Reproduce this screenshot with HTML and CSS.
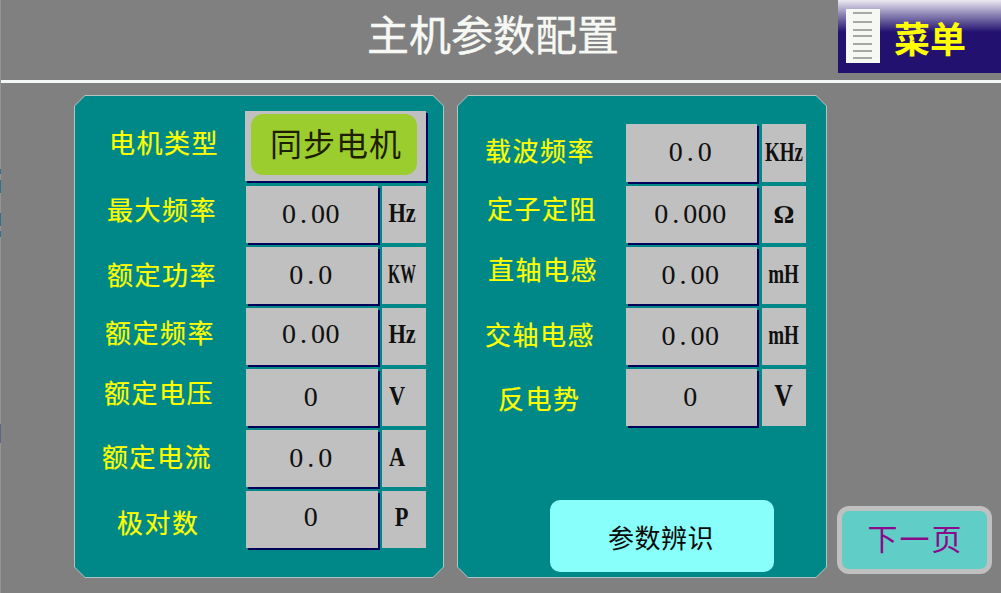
FILE: index.html
```html
<!DOCTYPE html>
<html lang="zh-CN">
<head>
    <meta charset="UTF-8">
    <title>主机参数配置</title>
    <link rel="stylesheet" href="styles.css">
</head>
<body>

<div class="edge"></div>

<header class="header">
    <h1 class="title">主机参数配置</h1>
    <div class="menu">
        <svg class="menu-icon" width="34" height="54" viewBox="0 0 34 54">
            <rect width="34" height="54" fill="#f6f8f4"/>
            <g stroke="#8c8c8c" stroke-width="1.5">
                <line x1="7" y1="4" x2="26" y2="4"/>
                <line x1="7" y1="13" x2="26" y2="13"/>
                <line x1="7" y1="21" x2="26" y2="21"/>
                <line x1="7" y1="27" x2="26" y2="27"/>
                <line x1="7" y1="35" x2="26" y2="35"/>
                <line x1="7" y1="42" x2="26" y2="42"/>
                <line x1="7" y1="49" x2="26" y2="49"/>
            </g>
        </svg>
        <span class="menu-text">菜单</span>
    </div>
</header>
<div class="rule"></div>

<main class="main">
    <section class="panel">
        <div class="panel-body grid-left">
            <div class="label l-1">电机类型</div>
            <div class="select"><span class="select-inner">同步电机</span></div>

            <div class="label l-2">最大频率</div>
            <div class="value">0<span class="dot">.</span>00</div>
            <div class="unit off"><span>Hz</span></div>

            <div class="label l-3">额定功率</div>
            <div class="value">0<span class="dot">.</span>0</div>
            <div class="unit off"><span class="tight">KW</span></div>

            <div class="label l-4">额定频率</div>
            <div class="value raise">0<span class="dot">.</span>00</div>
            <div class="unit off raise"><span>Hz</span></div>

            <div class="label l-5">额定电压</div>
            <div class="value">0</div>
            <div class="unit left"><span>V</span></div>

            <div class="label l-6">额定电流</div>
            <div class="value">0<span class="dot">.</span>0</div>
            <div class="unit left"><span>A</span></div>

            <div class="label l-7">极对数</div>
            <div class="value raise">0</div>
            <div class="unit off raise"><span>P</span></div>
        </div>
    </section>

    <section class="panel">
        <div class="panel-body grid-right">
            <div class="label r-1">载波频率</div>
            <div class="value">0<span class="dot">.</span>0</div>
            <div class="unit"><span class="narrow">KHz</span></div>

            <div class="label r-2">定子定阻</div>
            <div class="value">0<span class="dot">.</span>000</div>
            <div class="unit ohm">Ω</div>

            <div class="label r-3">直轴电感</div>
            <div class="value">0<span class="dot">.</span>00</div>
            <div class="unit"><span class="narrow">mH</span></div>

            <div class="label r-4">交轴电感</div>
            <div class="value">0<span class="dot">.</span>00</div>
            <div class="unit"><span class="narrow">mH</span></div>

            <div class="label r-5">反电势</div>
            <div class="value">0</div>
            <div class="unit big"><span>V</span></div>

            <button class="identify">参数辨识</button>
        </div>
    </section>

    <button class="next">下一页</button>
</main>

</body>
</html>
```

FILE: styles.css
```css
body {
    margin: 0;
    width: 1001px;
    height: 593px;
    overflow: hidden;
    background: rgb(128, 128, 128);
    font-family: "Liberation Sans", "Noto Sans CJK SC", sans-serif;
}

.edge {
    position: absolute;
    left: 0;
    top: 0;
    width: 1px;
    height: 593px;
    background: linear-gradient(to bottom,
        #949494 169px, #2a7196 169px, #2a7196 174px, #949494 174px,
        #949494 180px, #2a7196 180px, #2a7196 193px, #949494 193px,
        #949494 213px, #2a7196 213px, #2a7196 226px, #949494 226px,
        #949494 231px, #2a7196 231px, #2a7196 237px, #949494 237px,
        #949494 424px, #5a6a8c 424px, #5a6a8c 443px, #949494 443px);
}

.header {
    display: flex;
    height: 80px;
}
.title {
    margin: 0 0 0 367px;
    font-size: 42px;
    font-weight: normal;
    line-height: 74px;
    color: rgb(246, 248, 244);
    -webkit-text-stroke: 0.4px rgb(246, 248, 244);
    white-space: nowrap;
}
.menu {
    display: flex;
    align-items: center;
    box-sizing: border-box;
    width: 163px;
    height: 73px;
    margin-left: auto;
    padding-left: 8px;
    background: linear-gradient(to bottom, #ece9f2 0, #8f88b6 14px, #231170 32px, #231170 100%);
}
.menu-icon {
    flex: none;
    margin-top: -2px;
}
.menu-text {
    margin-left: 14px;
    font-size: 36px;
    font-weight: bold;
    color: rgb(255, 255, 0);
    white-space: nowrap;
}
.rule {
    height: 3px;
    margin-left: 1px;
    background: rgb(244, 248, 244);
}

.main {
    display: flex;
    align-items: flex-start;
    gap: 13px;
    padding: 12px 0 0 74px;
}
.panel {
    box-sizing: border-box;
    width: 370px;
    height: 483px;
    padding: 1px;
    background: rgb(176, 196, 196);
    clip-path: polygon(11px 0, calc(100% - 11px) 0, 100% 11px, 100% calc(100% - 11px), calc(100% - 11px) 100%, 11px 100%, 0 calc(100% - 11px), 0 11px);
}
.panel-body {
    box-sizing: border-box;
    height: 100%;
    background: rgb(0, 136, 136);
    clip-path: polygon(10px 0, calc(100% - 10px) 0, 100% 10px, 100% calc(100% - 10px), calc(100% - 10px) 100%, 10px 100%, 0 calc(100% - 10px), 0 10px);
    display: grid;
    gap: 4px;
    align-content: start;
}
.grid-left {
    grid-template-columns: 167px 132px 44px;
    grid-template-rows: 71px repeat(6, 57px);
    padding-top: 15px;
}
.grid-right {
    grid-template-columns: 163px 131px 44px;
    grid-template-rows: 58px repeat(4, 57px);
    padding-top: 28px;
    column-gap: 5px;
}

.label {
    display: flex;
    align-items: center;
    font-size: 26px;
    letter-spacing: 1.5px;
    color: rgb(255, 255, 0);
    -webkit-text-stroke: 0.2px rgb(255, 255, 0);
    white-space: nowrap;
}
.l-1 { padding: 0 0 11px 34px; }
.l-2 { padding: 0 0 13px 32px; }
.l-3 { padding: 0 0 5px 32px; }
.l-4 { padding: 0 0 11px 30px; }
.l-5 { padding: 0 0 12px 29px; }
.l-6 { padding: 0 0 6px 27px; }
.l-7 { padding: 4px 0 0 42px; }
.r-1 { padding: 0 0 7px 27px; }
.r-2 { padding: 0 0 15px 29px; }
.r-3 { padding: 0 0 15px 30px; }
.r-4 { padding: 0 0 7px 27px; }
.r-5 { padding: 0 0 1px 40px; }

.value,
.unit {
    display: flex;
    align-items: center;
    justify-content: center;
    box-sizing: border-box;
    background: rgb(192, 192, 192);
    color: rgb(16, 16, 16);
    font-family: "Liberation Serif", "Noto Sans CJK SC", serif;
}
.value {
    padding: 0 2px 2px 0;
    font-size: 28px;
    letter-spacing: 0.5px;
    box-shadow: 2px 2px 0 rgb(0, 0, 90);
}
.dot {
    padding: 0 3.5px;
}
.unit {
    padding-bottom: 3px;
    font-size: 28px;
    font-weight: bold;
}
.unit span {
    display: inline-block;
    transform: scaleX(0.8);
}
.unit .tight {
    transform: scaleX(0.56);
}
.unit .narrow {
    transform: scaleX(0.68);
}
.off {
    padding-right: 4px;
}
.left {
    padding-right: 14px;
}
.value.raise {
    padding-bottom: 6px;
}
.unit.raise {
    padding-bottom: 5px;
}
.ohm {
    padding-bottom: 0;
    font-size: 26px;
}
.big {
    padding-bottom: 5px;
    font-size: 32px;
}

.select {
    grid-column: 2 / 4;
    box-sizing: border-box;
    width: 181px;
    height: 70px;
    margin-left: -1px;
    padding: 3px 9px 6px 6px;
    background: rgb(192, 192, 192);
    box-shadow: 2px 2px 0 rgb(0, 0, 90);
}
.select-inner {
    display: flex;
    align-items: center;
    justify-content: center;
    box-sizing: border-box;
    height: 100%;
    padding: 0 0 6px 4px;
    border-radius: 12px;
    background: rgb(154, 205, 45);
    color: rgb(30, 30, 0);
    font-size: 32px;
    letter-spacing: 1px;
}

.identify {
    grid-column: 1 / 4;
    width: 224px;
    height: 72px;
    margin: 70px 0 0 92px;
    padding: 0 2px 0 0;
    border: none;
    border-radius: 10px;
    background: rgb(136, 255, 250);
    color: rgb(10, 10, 10);
    font-family: inherit;
    font-size: 26px;
    letter-spacing: 0.5px;
}
.next {
    align-self: flex-end;
    box-sizing: border-box;
    width: 155px;
    height: 68px;
    margin: 0 0 4px -3px;
    padding: 0 0 6px 2px;
    border: 5px solid rgb(192, 192, 192);
    border-radius: 12px;
    background: rgb(96, 205, 198);
    color: rgb(139, 10, 139);
    font-family: inherit;
    font-size: 30px;
    letter-spacing: 2px;
}
```
